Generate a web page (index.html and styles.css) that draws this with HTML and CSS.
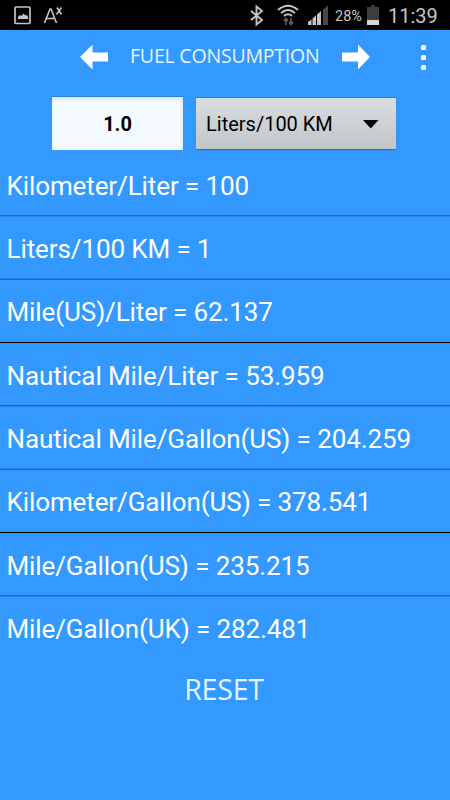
FILE: index.html
```html
<!DOCTYPE html>
<html lang="en">
<head>
    <meta charset="UTF-8">
    <meta name="viewport" content="width=device-width, initial-scale=1.0">
    <title>Fuel Consumption</title>
    <link rel="stylesheet" href="styles.css">
</head>
<body>
    <div class="status-bar">
        <svg class="status-left" width="80" height="30" viewBox="0 0 80 30">
            <rect x="15" y="7" width="15" height="16.5" rx="1" fill="none" stroke="#c4c4c4" stroke-width="1.7"/>
            <path d="M18 19v-2l2-2 1.500 1 2-2.500 2 2 1.500-.5 1 2v2z" fill="#c4c4c4"/>
            <path d="M44.500 23l5.500-14h1l5.500 14M46.500 18.500h8M57 7.500l4.500 7M61.500 7.500l-5 7" fill="none" stroke="#c4c4c4" stroke-width="1.600"/>
        </svg>
        <svg class="status-icons" width="84" height="30" viewBox="246 0 84 30">
            <path d="M251 11l11 9-5.500 4.500V6.500l5.500 4.500-11 9" fill="none" stroke="#c4c4c4" stroke-width="1.900"/>
            <g fill="none" stroke="#c4c4c4" stroke-width="1.900">
                <path d="M278 10q10-8.500 20 0"/>
                <path d="M281 13q7-6 14 0"/>
                <path d="M284 16q4-3.500 8 0"/>
            </g>
            <path d="M286 25v-6M284 21l2-2.500 2 2.500M291 18v6M289 22l2 2.500 2-2.500" fill="none" stroke="#666" stroke-width="1.500"/>
            <path d="M308 25v-3l3.500-2.500v5.500zM312.500 25v-6.500l3.500-3.300v9.800zM317 25v-10.500l4-3.500v14z" fill="#c4c4c4"/>
            <path d="M323 25v-15.500l5-4v19.500z" fill="#484848"/>
        </svg>
        <span class="percent">28%</span>
        <svg class="battery" width="14" height="20" viewBox="0 0 14 20">
            <path d="M1 2h4v-2h4v2h4v13h-12z" fill="#3d3d3d"/>
            <rect x="1" y="15" width="12" height="5" fill="#d6d6d6"/>
        </svg>
        <span class="clock">11:39</span>
    </div>

    <div class="title-bar">
        <svg class="arrow" width="28" height="26" viewBox="0 0 28 26">
            <path d="M0 13L12.500 .5V8.500H28V17.500H12.500V25.500z" fill="white"/>
        </svg>
        <h1>FUEL CONSUMPTION</h1>
        <svg class="arrow" width="28" height="26" viewBox="0 0 28 26">
            <path d="M28 13L16 .5V8.500H0V17.500H16V25.500z" fill="white"/>
        </svg>
        <div class="menu"><i></i><i></i><i></i></div>
    </div>

    <div class="inputs">
        <div class="amount">1.0</div>
        <div class="unit">
            <span>Liters/100 KM</span>
            <svg width="16" height="9" viewBox="0 0 16 9"><path d="M0 0h15.500L7.750 8.500z" fill="black"/></svg>
        </div>
    </div>

    <ul class="results">
        <li>Kilometer/Liter = 100</li>
        <li>Liters/100 KM = 1</li>
        <li>Mile(US)/Liter = 62.137</li>
        <li>Nautical Mile/Liter = 53.959</li>
        <li>Nautical Mile/Gallon(US) = 204.259</li>
        <li>Kilometer/Gallon(US) = 378.541</li>
        <li>Mile/Gallon(US) = 235.215</li>
        <li>Mile/Gallon(UK) = 282.481</li>
    </ul>

    <div class="reset">RESET</div>
</body>
</html>
```
FILE: styles.css
```css
* {
    box-sizing: border-box;
}

body {
    margin: 0;
    height: 800px;
    overflow: hidden;
    background-color: #3399ff;
    font-family: Roboto, sans-serif;
}

.status-bar {
    display: flex;
    align-items: center;
    height: 30px;
    background-color: black;
    color: #c4c4c4;
}

.status-icons {
    margin-left: 166px;
}

.percent {
    width: 30px;
    margin-left: 5px;
    font-size: 14.5px;
    padding-top: 3px;
}

.battery {
    margin-left: 1px;
}

.clock {
    margin-left: 8px;
    padding-top: 2px;
    font-size: 20px;
}

.title-bar {
    display: flex;
    align-items: center;
    height: 54px;
    padding-left: 80px;
}

h1 {
    width: 190px;
    margin: -3px 22px 0;
    font-family: "Open Sans", sans-serif;
    font-size: 19.5px;
    font-weight: 400;
    letter-spacing: -0.2px;
    white-space: nowrap;
    color: #e6f2ff;
}

.menu {
    display: flex;
    flex-direction: column;
    gap: 5px;
    margin-left: 51px;
}

.menu i {
    width: 5px;
    height: 5px;
    border-radius: 1.5px;
    background-color: white;
}

.inputs {
    display: flex;
    height: 69px;
    padding: 13px 0 0 52px;
    color: black;
}

.amount {
    width: 131px;
    height: 53px;
    line-height: 54px;
    text-align: center;
    font-size: 20px;
    font-weight: bold;
    background-color: #f4faff;
    box-shadow: inset 0 2px 4px #d9e1e6, 0 -1px 0 #2a83d8;
}

.unit {
    display: flex;
    align-items: center;
    justify-content: space-between;
    width: 200px;
    height: 51px;
    margin: 1px 0 0 13px;
    padding: 1px 17px 0 10px;
    font-size: 20px;
    background: linear-gradient(#d8dde0, #c2c6c9);
    border-radius: 1px;
    box-shadow: 0 1px 1px #49617a, 0 -1px 0 #2a83d8;
}

.results {
    list-style: none;
    margin: 0;
    padding: 0;
}

.results li {
    height: 63px;
    padding-left: 6.5px;
    line-height: 64px;
    font-size: 26px;
    letter-spacing: -0.1px;
    white-space: nowrap;
    color: white;
    background: linear-gradient(#2e87df 50%, #2568ab 50%) bottom / 100% 2px no-repeat;
}

.results li:nth-child(3n+1) {
    height: 64px;
    line-height: 66px;
    background-image: linear-gradient(#2568ab 50%, #2e87df 50%);
}

.results li:nth-child(3n) {
    background: linear-gradient(black, black) bottom / 100% 1px no-repeat;
}

.results li:last-child {
    background: none;
}

.reset {
    padding: 10px 2px 0 0;
    text-align: center;
    font-family: "Open Sans", sans-serif;
    font-size: 28.5px;
    font-weight: 400;
    letter-spacing: -0.2px;
    color: #e6f2ff;
}
```
